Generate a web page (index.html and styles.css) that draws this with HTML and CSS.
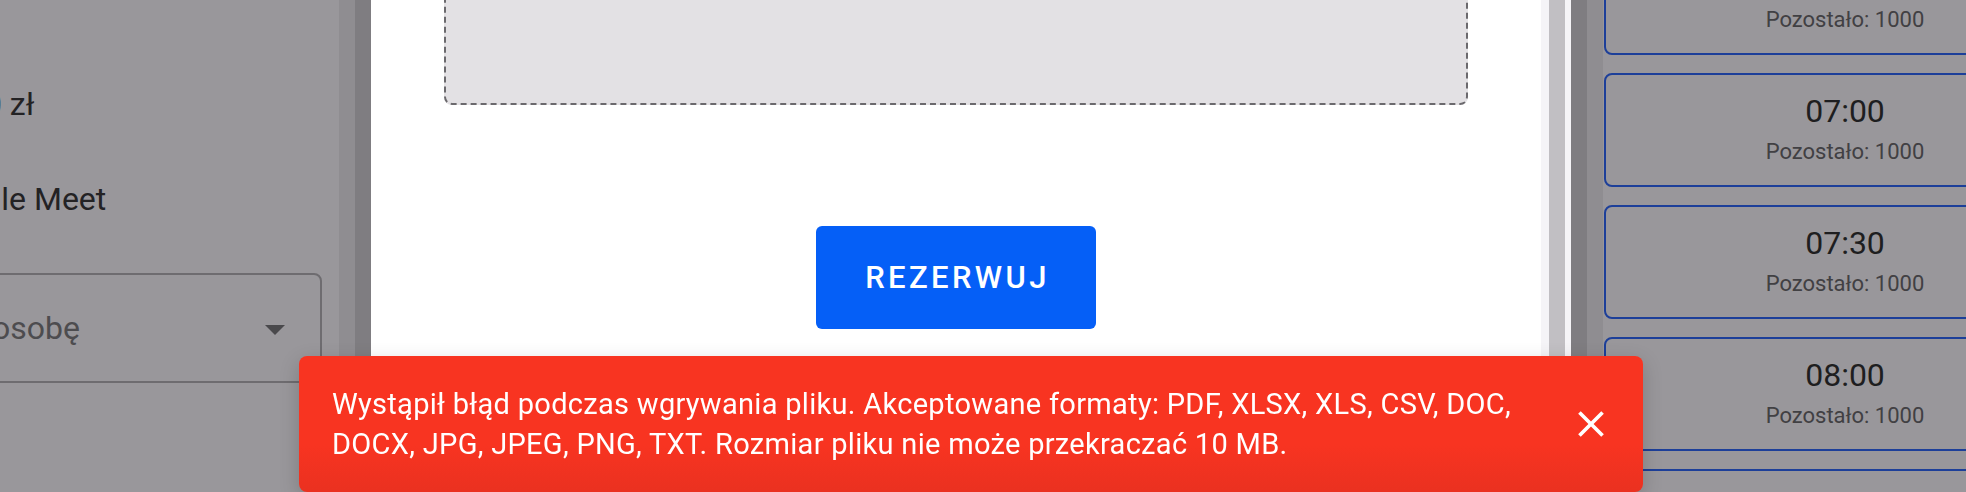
FILE: index.html
```html
<!DOCTYPE html>
<html lang="pl">

<head>
    <meta charset="UTF-8">
    <meta name="viewport" content="width=device-width, initial-scale=1.0">
    <title>Rezerwacja</title>
    <link rel="stylesheet" href="styles.css">
</head>

<body>
    <div class="page">
        <div class="left-panel">
            <div class="left-inner">
                <div class="info-line price">2 000 zł</div>
                <div class="info-line place">Google Meet</div>
                <div class="select">
                    <span class="select-text">Wybierz osobę</span>
                    <span class="select-arrow"></span>
                </div>
            </div>
        </div>

        <div class="modal">
            <div class="modal-body">
                <div class="dropzone"></div>
                <button class="submit-btn">Rezerwuj</button>
            </div>
            <div class="modal-scroll">
                <div class="scroll-thumb"></div>
            </div>
        </div>

        <div class="right-panel">
            <div class="slot">
                <div class="slot-time">06:30</div>
                <div class="slot-left">Pozostało: 1000</div>
            </div>
            <div class="slot">
                <div class="slot-time">07:00</div>
                <div class="slot-left">Pozostało: 1000</div>
            </div>
            <div class="slot">
                <div class="slot-time">07:30</div>
                <div class="slot-left">Pozostało: 1000</div>
            </div>
            <div class="slot">
                <div class="slot-time">08:00</div>
                <div class="slot-left">Pozostało: 1000</div>
            </div>
            <div class="slot">
                <div class="slot-time">08:30</div>
                <div class="slot-left">Pozostało: 1000</div>
            </div>
        </div>
    </div>

    <div class="snackbar">
        <div class="snackbar-message">
            Wystąpił błąd podczas wgrywania pliku. Akceptowane formaty: PDF, XLSX, XLS, CSV, DOC, DOCX, JPG, JPEG, PNG, TXT. Rozmiar pliku nie może przekraczać 10 MB.
        </div>
        <div class="snackbar-action">
            <svg width="44" height="44" viewBox="0 0 24 24" fill="#ffffff">
                <path d="M19 6.41 17.59 5 12 10.59 6.41 5 5 6.41 10.59 12 5 17.59 6.41 19 12 13.41 17.59 19 19 17.59 13.41 12z"></path>
            </svg>
        </div>
    </div>
</body>

</html>
```

FILE: styles.css
```css
body {
    font-family: Roboto, "Liberation Sans", sans-serif;
    background-color: #99979b;
    margin: 0;
    height: 492px;
    overflow: hidden;
}

.page {
    display: flex;
    height: 492px;
}

/* page behind the dialog (dimmed) */

.left-panel {
    flex: none;
    width: 340px;
    overflow: hidden;
}

.left-inner {
    width: 482px;
    margin-left: -160px;
    padding-top: 84px;
}

.info-line {
    padding-left: 85px;
    font-size: 32px;
    line-height: 40px;
    color: #232224;
}

.price {
    margin-bottom: 55px;
    padding-left: 82px;
}

.select {
    display: flex;
    align-items: center;
    justify-content: space-between;
    height: 106px;
    margin-top: 54px;
    padding: 0 35px 0 29px;
    border: 2px solid #6e6c70;
    border-radius: 8px;
}

.select-text {
    font-size: 32px;
    line-height: 40px;
    color: #4d4c4f;
}

.select-arrow {
    width: 0;
    height: 0;
    border-left: 10px solid transparent;
    border-right: 10px solid transparent;
    border-top: 10px solid #4a494c;
    margin-top: 4px;
}

.right-panel {
    flex: none;
    width: 482px;
    margin-left: 33px;
    margin-top: -59px;
    display: flex;
    flex-direction: column;
    gap: 18px;
}

.slot {
    flex: none;
    height: 114px;
    border: 2px solid #1d3f99;
    border-radius: 8px;
    padding-top: 16px;
    box-sizing: border-box;
    text-align: center;
}

.slot-time {
    font-size: 32px;
    line-height: 40px;
    color: #1e1e20;
}

.slot-left {
    margin-top: 6px;
    font-size: 22px;
    line-height: 30px;
    color: #414043;
}

/* dialog */

.modal {
    flex: none;
    display: flex;
    width: 1200px;
    margin-left: 31px;
    box-shadow: 0 0 0 16px #7f7d81, 0 0 0 32px #8f8d91;
    position: relative;
}

.modal-body {
    width: 1170px;
    background: #ffffff;
    padding: 0 73px;
    box-sizing: border-box;
    display: flex;
    flex-direction: column;
    align-items: center;
}

.dropzone {
    flex: none;
    align-self: stretch;
    height: 160px;
    margin-top: -55px;
    background: #e3e1e4;
    border: 2px dashed #6b696d;
    border-radius: 8px;
    box-sizing: border-box;
}

.submit-btn {
    flex: none;
    width: 280px;
    height: 103px;
    margin-top: 121px;
    background-color: #055ff7;
    color: #ffffff;
    border: none;
    border-radius: 6px;
    font-family: Roboto, sans-serif;
    font-size: 31px;
    font-weight: 500;
    letter-spacing: 3.4px;
    text-transform: uppercase;
    padding: 0 0 0 3px;
    cursor: pointer;
}

.modal-scroll {
    width: 30px;
    background: #f5f4f7;
    padding-left: 8px;
    box-sizing: border-box;
}

.scroll-thumb {
    width: 16px;
    height: 100%;
    background: #c1bfc3;
}

/* error toast */

.snackbar {
    position: fixed;
    left: 299px;
    top: 356px;
    width: 1344px;
    height: 136px;
    box-sizing: border-box;
    padding: 12px 30px 12px 33px;
    display: flex;
    align-items: center;
    background: linear-gradient(to bottom, #f83421 65%, #ea3120 100%);
    border-radius: 8px;
    box-shadow: 0 6px 20px rgba(0, 0, 0, 0.18);
    color: #ffffff;
}

.snackbar-message {
    flex: 1;
    padding: 16px 0;
    font-size: 29px;
    line-height: 40px;
    letter-spacing: 0.3px;
}

.snackbar-action {
    padding-left: 24px;
    display: flex;
}
```
